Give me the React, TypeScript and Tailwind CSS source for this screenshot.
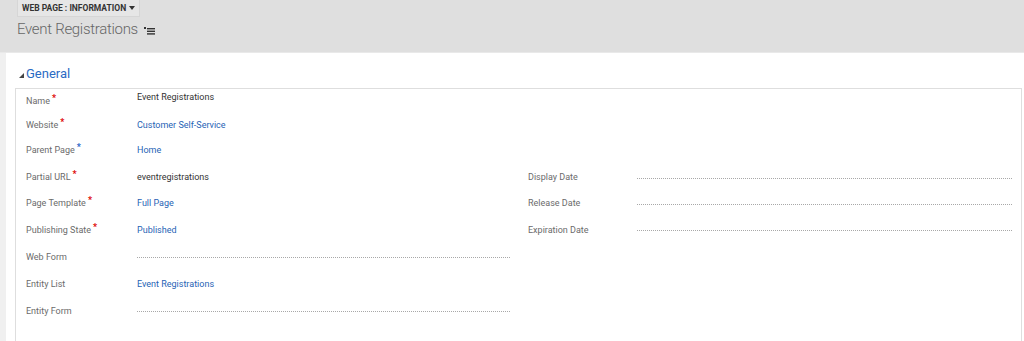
import React from 'react';

type Field = {
  label: string;
  req?: 'red' | 'blue';
  value?: string;
  link?: boolean;
};

type Row = { h: string; left: Field; right?: Field };

const ROWS: Row[] = [
  { h: 'h-[24px]', left: { label: 'Name', req: 'red', value: 'Event Registrations' } },
  { h: 'h-[23px]', left: { label: 'Website', req: 'red', value: 'Customer Self-Service', link: true } },
  { h: 'h-[28px]', left: { label: 'Parent Page', req: 'blue', value: 'Home', link: true } },
  {
    h: 'h-[26px]',
    left: { label: 'Partial URL', req: 'red', value: 'eventregistrations' },
    right: { label: 'Display Date' },
  },
  {
    h: 'h-[26px]',
    left: { label: 'Page Template', req: 'red', value: 'Full Page', link: true },
    right: { label: 'Release Date' },
  },
  {
    h: 'h-[27px]',
    left: { label: 'Publishing State', req: 'red', value: 'Published', link: true },
    right: { label: 'Expiration Date' },
  },
  { h: 'h-[27px]', left: { label: 'Web Form' } },
  { h: 'h-[28px]', left: { label: 'Entity List', value: 'Event Registrations', link: true } },
  { h: 'h-[25px]', left: { label: 'Entity Form' } },
];

function FieldCell({ field, labelW }: { field: Field; labelW: string }) {
  return (
    <>
      <div className={`${labelW} shrink-0 text-[9px] text-[#6b6b6b] flex items-start`}>
        <span>{field.label}</span>
        {field.req && (
          <span
            className={`ml-[2px] -mt-[1px] text-[9px] font-bold leading-none ${
              field.req === 'red' ? 'text-[#d00]' : 'text-[#1f63c8]'
            }`}
          >
            *
          </span>
        )}
      </div>
      {field.value ? (
        <div
          className={`flex-1 text-[9px] ${field.link ? 'text-[#1f63b5]' : 'text-[#333]'} ${
            field.label === 'Name' ? '-mt-[8px]' : ''
          }`}
        >
          {field.value}
        </div>
      ) : (
        <div className="flex-1 h-0 border-t border-dotted border-[#a8a8a8]" />
      )}
    </>
  );
}

export default function App() {
  return (
    <div
      className="w-[1024px] h-[341px] overflow-hidden bg-[#f0f0f0]"
      style={{ fontFamily: 'Roboto, "Open Sans", Arial, sans-serif' }}
    >
      {/* Header */}
      <div className="h-[53px] bg-[#dfdfdf] border-b border-[#e9e9e9] pl-[17px]">
        <div className="flex">
          <div className="flex items-center h-[17px] px-[4px] bg-[#e6e6e6] border border-t-0 border-[#d6d6d6] text-[8.5px] font-bold text-[#333]">
            WEB PAGE : INFORMATION
            <svg width="6" height="4" viewBox="0 0 6 4" className="ml-[3px]">
              <path d="M0 0 L6 0 L3 4 Z" fill="#333" />
            </svg>
          </div>
        </div>
        <div className="flex items-center mt-[5px] leading-none">
          <span className="text-[15px] font-light tracking-[-0.3px] text-[#666]">Event Registrations</span>
          <svg width="11" height="8" viewBox="0 0 11 8" className="ml-[6px] mt-[3px]">
            <rect x="0" y="0" width="2" height="2" fill="#333" />
            <rect x="3" y="1" width="8" height="1.4" fill="#333" />
            <rect x="3" y="3.6" width="8" height="1.4" fill="#333" />
            <rect x="3" y="6.2" width="8" height="1.4" fill="#333" />
          </svg>
        </div>
      </div>

      {/* Body */}
      <div className="ml-[6px] bg-white h-[288px] pt-[9px]">
        <div className="flex items-center pl-[13px] h-[24px] mb-[2px]">
          <svg width="5" height="5" viewBox="0 0 5 5" className="mt-[3px]">
            <path d="M5 0 L5 5 L0 5 Z" fill="#444" />
          </svg>
          <span className="ml-[2px] text-[13px] text-[#2a6bc4]">General</span>
        </div>

        <div className="ml-[9px] mr-[2px] h-[260px] border border-b-0 border-[#dedede] pt-[1px]">
          {ROWS.map((row, i) => (
            <div key={i} className={`flex items-center ${row.h}`}>
              <div className="w-[504px] shrink-0 flex items-center pl-[10px] pr-[10px]">
                <FieldCell field={row.left} labelW="w-[111px]" />
              </div>
              <div className="flex-1 flex items-center pl-[8px] pr-[9px]">
                {row.right && <FieldCell field={row.right} labelW="w-[109px]" />}
              </div>
            </div>
          ))}
        </div>
      </div>
    </div>
  );
}
